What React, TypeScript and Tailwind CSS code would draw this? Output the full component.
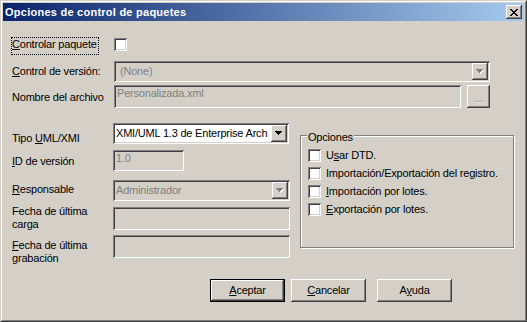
import type { ReactNode } from "react";

const sunken =
  "shadow-[inset_1px_1px_0_#808080,inset_-1px_-1px_0_#ffffff,inset_2px_2px_0_#404040,inset_-2px_-2px_0_#d4d0c8]";
const raised =
  "shadow-[inset_-1px_-1px_0_#404040,inset_1px_1px_0_#ffffff,inset_-2px_-2px_0_#808080,inset_2px_2px_0_#d4d0c8]";

function Arrow({ disabled }: { disabled?: boolean }) {
  const rows = [0, 1, 2, 3];
  return (
    <svg width="8" height="5" viewBox="0 0 8 5" shapeRendering="crispEdges">
      {disabled &&
        rows.map((i) => (
          <rect key={"s" + i} x={i + 1} y={i + 1} width={7 - 2 * i} height={1} fill="#ffffff" />
        ))}
      {rows.map((i) => (
        <rect key={i} x={i} y={i} width={7 - 2 * i} height={1} fill={disabled ? "#808080" : "#000000"} />
      ))}
    </svg>
  );
}

function CloseX() {
  const px: number[][] = [];
  for (let r = 0; r < 7; r++) px.push([r, r], [r + 1, r], [6 - r, r], [7 - r, r]);
  return (
    <svg width="8" height="7" viewBox="0 0 8 7" shapeRendering="crispEdges">
      {px.map(([x, y], i) => (
        <rect key={i} x={x} y={y} width={1} height={1} fill="#000000" />
      ))}
    </svg>
  );
}

function Combo({
  value,
  width,
  disabled,
  pad,
}: {
  value: string;
  width: string;
  disabled?: boolean;
  pad: string;
}) {
  return (
    <div
      className={`${width} h-[21px] p-[2px] flex items-stretch ${sunken} ${
        disabled ? "bg-[#d4d0c8] text-[#808080]" : "bg-white text-black"
      }`}
    >
      <div className={`flex-1 flex items-center overflow-hidden whitespace-nowrap ${pad}`}>{value}</div>
      <div className={`w-[16px] h-[17px] bg-[#d4d0c8] flex items-center justify-center ${raised}`}>
        <Arrow disabled={disabled} />
      </div>
    </div>
  );
}

function Field({ value, width, height }: { value?: string; width: string; height: string }) {
  return (
    <div className={`${width} ${height} p-[2px] pl-[3px] bg-[#d4d0c8] text-[#808080] ${sunken}`}>{value}</div>
  );
}

function Check() {
  return <div className={`w-[13px] h-[13px] shrink-0 bg-white ${sunken}`} />;
}

function Button({ children, isDefault }: { children: ReactNode; isDefault?: boolean }) {
  return (
    <div
      className={`w-[75px] h-[23px] flex items-center justify-center bg-[#d4d0c8] ${
        isDefault ? "border border-black" : ""
      } ${raised}`}
    >
      {children}
    </div>
  );
}

function Option({ children }: { children: ReactNode }) {
  return (
    <div className="flex items-center h-[13px]">
      <Check />
      <span className="ml-[5px] whitespace-nowrap">{children}</span>
    </div>
  );
}

export default function App() {
  return (
    <div className="w-[527px] h-[322px] overflow-hidden bg-[#d4d0c8] border border-t-[#d4d0c8] border-l-[#d4d0c8] border-r-[#404040] border-b-[#404040] font-['Liberation_Sans',Arial,sans-serif] text-[11px] leading-[13px] tracking-[-0.2px] text-black">
      <div className="h-full border border-t-white border-l-white border-r-[#808080] border-b-[#808080] p-[1px] flex flex-col">
        {/* title bar */}
        <div className="h-[18px] flex items-center pl-[2px] pr-[2px] bg-[linear-gradient(to_right,#0a246a,#a6caf0)]">
          <span className="text-white font-bold tracking-[0.25px]">Opciones de control de paquetes</span>
          <div className={`ml-auto w-[16px] h-[14px] bg-[#d4d0c8] flex items-center justify-center ${raised}`}>
            <CloseX />
          </div>
        </div>

        <div className="flex-1 pl-[9px]">
          {/* Controlar paquete */}
          <div className="mt-[16px] flex h-[18px]">
            <div className="w-[102px]">
              <span className="-ml-[1px] inline-block h-[18px] pr-[1px] border border-dotted border-black whitespace-nowrap">
                <u>C</u>ontrolar paquete
              </span>
            </div>
            <div className="mt-[1px]">
              <Check />
            </div>
          </div>

          {/* Control de versión */}
          <div className="mt-[6px] flex h-[21px]">
            <div className="w-[102px] pt-[4px] whitespace-nowrap">
              <u>C</u>ontrol de versión:
            </div>
            <Combo value="(None)" width="w-[376px]" disabled pad="pl-[4px]" />
          </div>

          {/* Nombre del archivo */}
          <div className="mt-[3px] flex h-[23px]">
            <div className="w-[102px] pt-[6px] whitespace-nowrap">Nombre del archivo</div>
            <Field value="Personalizada.xml" width="w-[347px]" height="h-[23px]" />
            <div
              className={`ml-[6px] w-[23px] h-[23px] flex items-end justify-center pb-[3px] bg-[#d4d0c8] text-[#808080] [text-shadow:1px_1px_0_#ffffff] ${raised}`}
            >
              ...
            </div>
          </div>

          {/* lower section */}
          <div className="flex items-start">
            <div className="w-[278px]">
              <div className="mt-[15px] flex h-[21px]">
                <div className="w-[101px] pt-[9px] whitespace-nowrap">
                  Tipo <u>U</u>ML/XMI
                </div>
                <Combo value="XMI/UML 1.3 de Enterprise Arch" width="w-[176px]" pad="pl-[1px]" />
              </div>
              <div className="mt-[6px] flex h-[21px]">
                <div className="w-[101px] pt-[5px] whitespace-nowrap">
                  <u>I</u>D de versión
                </div>
                <Field value="1.0" width="w-[71px]" height="h-[21px]" />
              </div>
              <div className="mt-[9px] flex h-[21px]">
                <div className="w-[101px] pt-[3px] whitespace-nowrap">
                  <u>R</u>esponsable
                </div>
                <Combo value="Administrador" width="w-[177px]" disabled pad="pl-[1px]" />
              </div>
              <div className="mt-[4px] flex h-[25px]">
                <div className="w-[101px] whitespace-nowrap">
                  Fecha de última
                  <br />
                  carga
                </div>
                <div className="mt-[2px]">
                  <Field width="w-[177px]" height="h-[23px]" />
                </div>
              </div>
              <div className="mt-[5px] flex h-[23px]">
                <div className="w-[101px] pt-[4px] whitespace-nowrap">
                  <u>F</u>echa de última
                  <br />
                  grabación
                </div>
                <Field width="w-[177px]" height="h-[23px]" />
              </div>
            </div>

            {/* Opciones group */}
            <div className="relative ml-[10px] mt-[27px] w-[214px] h-[113px] border border-[#808080] shadow-[inset_1px_1px_0_#ffffff,1px_1px_0_#ffffff] pl-[7px] pt-[13px] flex flex-col gap-[5px]">
              <span className="absolute top-[-5px] left-[6px] px-[1px] bg-[#d4d0c8]">Opciones</span>
              <Option>
                U<u>s</u>ar DTD.
              </Option>
              <Option>Importación/Exportación del registro.</Option>
              <Option>
                <u>I</u>mportación por lotes.
              </Option>
              <Option>
                <u>E</u>xportación por lotes.
              </Option>
            </div>
          </div>

          {/* buttons */}
          <div className="mt-[21px] ml-[198px] flex">
            <Button isDefault>
              <u>A</u>ceptar
            </Button>
            <div className="ml-[6px]">
              <Button>
                <u>C</u>ancelar
              </Button>
            </div>
            <div className="ml-[11px]">
              <Button>
                A<u>y</u>uda
              </Button>
            </div>
          </div>
        </div>
      </div>
    </div>
  );
}
